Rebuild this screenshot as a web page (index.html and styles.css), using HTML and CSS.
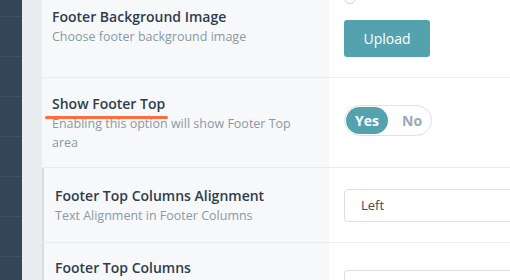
FILE: index.html
```html
<!DOCTYPE html>
<html lang="en">
<head>
  <meta charset="UTF-8" />
  <title>Footer Options</title>
  <link rel="stylesheet" href="styles.css">
</head>
<body>
  <div class="layout">
    <aside class="sidebar">
      <div class="nav-item first"></div>
      <div class="nav-item"></div>
      <div class="nav-item"></div>
      <div class="nav-item"></div>
      <div class="nav-item"></div>
      <div class="nav-item"></div>
      <div class="nav-item"></div>
    </aside>
    <div class="gutter"></div>
    <main class="options">
      <div class="row row-bg">
        <div class="label">
          <h4>Footer Background Image</h4>
          <p>Choose footer background image</p>
        </div>
        <div class="control control-top">
          <span class="radio"></span>
          <button class="btn">Upload</button>
        </div>
      </div>

      <div class="row row-show">
        <div class="label">
          <h4><span class="marked">Show Footer Top</span></h4>
          <p>Enabling this option will show Footer Top area</p>
        </div>
        <div class="control">
          <div class="toggle">
            <span class="toggle-on">Yes</span>
            <span class="toggle-off">No</span>
          </div>
        </div>
      </div>

      <div class="row row-sub">
        <div class="label">
          <h4>Footer Top Columns Alignment</h4>
          <p>Text Alignment in Footer Columns</p>
        </div>
        <div class="control">
          <div class="select">Left</div>
        </div>
      </div>

      <div class="row row-sub row-last">
        <div class="label">
          <h4>Footer Top Columns</h4>
        </div>
        <div class="control control-top">
          <div class="select"></div>
        </div>
      </div>
    </main>
  </div>
</body>
</html>
```

FILE: styles.css
```css
body {
  margin: 0;
  font-family: "Open Sans", "Liberation Sans", sans-serif;
  background: #ffffff;
  overflow: hidden;
}
.layout {
  display: flex;
  height: 280px;
  overflow: hidden;
}
.sidebar {
  width: 22px;
  flex-shrink: 0;
  background: #354658;
}
.nav-item {
  height: 39px;
  border-bottom: 1px solid #3f5164;
}
.nav-item.first {
  height: 16px;
}
.gutter {
  width: 20px;
  flex-shrink: 0;
  background: #e9edf0;
}
.options {
  flex-shrink: 0;
  width: 560px;
}
.row {
  display: flex;
  border-bottom: 1px solid #e9ebee;
}
.label {
  width: 287px;
  flex-shrink: 0;
  box-sizing: border-box;
  background: #f7f8fa;
  padding: 16px 20px 15px 10px;
}
.label h4 {
  margin: 0;
  font-size: 14px;
  line-height: 20px;
  font-weight: 600;
  color: #2f3d4c;
}
.label p {
  margin: 0;
  font-size: 12.5px;
  line-height: 19px;
  color: #8c98a5;
}
.control {
  flex: 1;
  padding-left: 15px;
  display: flex;
  align-items: center;
}
.control-top {
  flex-direction: column;
  align-items: flex-start;
}

/* first row is partly scrolled out of view */
.row-bg .label {
  padding-top: 7px;
  height: 77px;
}
.radio {
  display: block;
  width: 10px;
  height: 10px;
  border: 1px solid #cfd4da;
  border-radius: 50%;
  margin-top: -8px;
}
.btn {
  margin-top: 16px;
  width: 86px;
  height: 37px;
  border: none;
  border-radius: 3px;
  background: #55a2af;
  color: #ffffff;
  font-family: "Open Sans", "Liberation Sans", sans-serif;
  font-size: 14px;
  cursor: pointer;
}

.marked {
  display: inline-block;
  position: relative;
}
.marked::after {
  content: "";
  position: absolute;
  left: -7px;
  right: -3px;
  bottom: -5px;
  height: 3px;
  border-radius: 2px;
  background: #ff6d3f;
}
.row-show .control {
  padding-bottom: 5px;
}
.toggle {
  display: flex;
  align-items: center;
  width: 86px;
  height: 29px;
  border: 1px solid #dde0e4;
  border-radius: 16px;
  background: #ffffff;
  font-size: 14px;
  font-weight: 700;
}
.toggle-on {
  width: 42px;
  height: 27px;
  margin-left: 1px;
  border-radius: 14px;
  background: #55a2af;
  color: #ffffff;
  line-height: 27px;
  text-align: center;
}
.toggle-off {
  margin-left: 14px;
  color: #9aa9b6;
}

.row-sub .label {
  border-left: 2px solid #d6dbe4;
  padding: 18px 20px 17px 11px;
}
.row-last .label {
  padding-top: 15px;
  height: 60px;
}
.row-last .control {
  padding-top: 27px;
}
.select {
  box-sizing: border-box;
  width: 220px;
  height: 33px;
  border: 1px solid #dcdfe2;
  border-radius: 4px;
  padding-left: 16px;
  font-size: 13px;
  line-height: 31px;
  color: #444b52;
}
```
